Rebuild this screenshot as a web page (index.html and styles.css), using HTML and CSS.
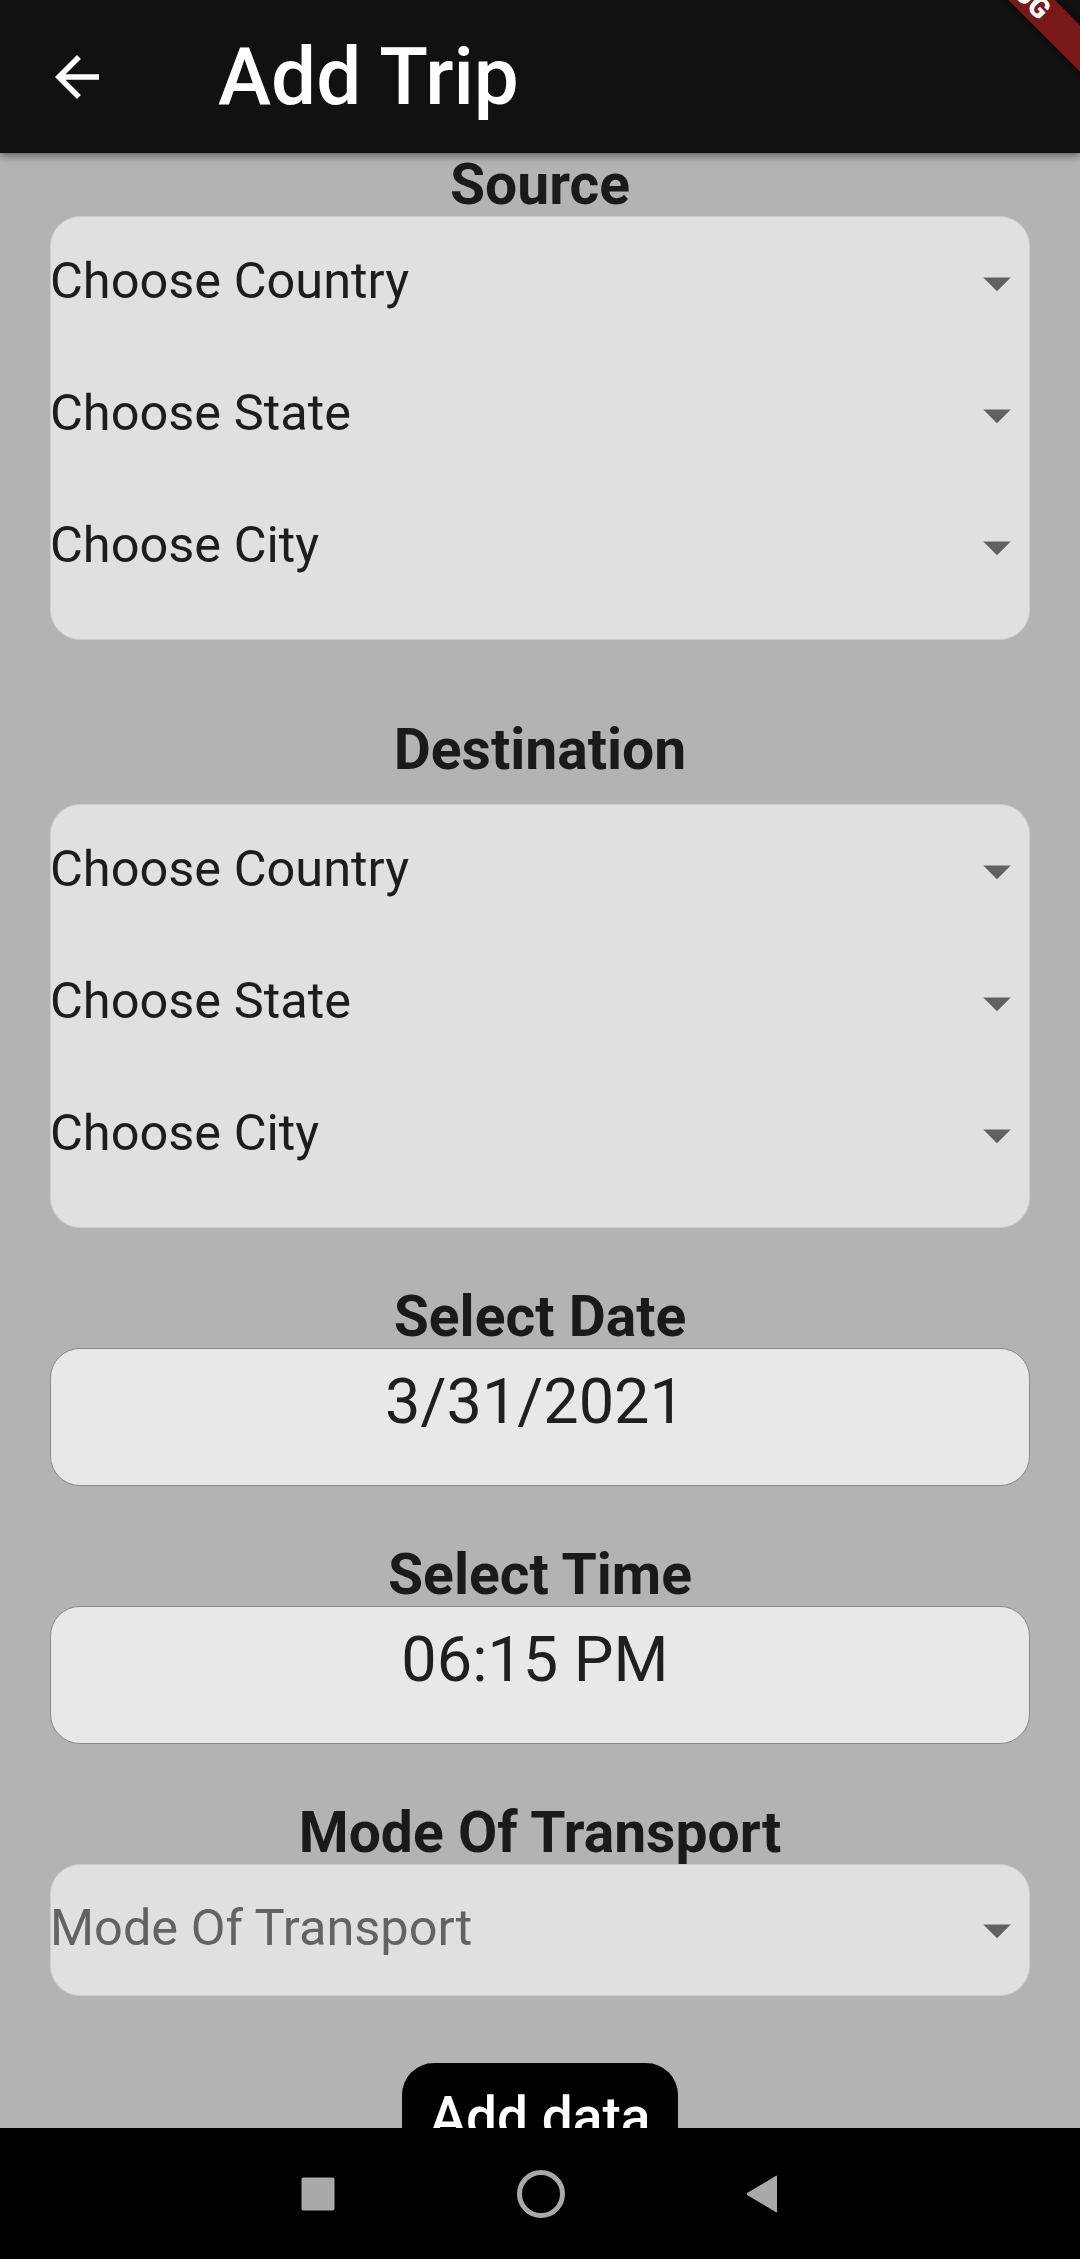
FILE: index.html
```
<!DOCTYPE html>
<html>
<head>
<meta charset="utf-8">
<link rel="stylesheet" href="styles.css">
</head>
<body>
<div class="screen">
  <header class="appbar">
    <div class="leading">
      <svg class="back" viewBox="0 0 24 24" width="66" height="66"><path d="M20 11H7.83l5.59-5.59L12 4l-8 8 8 8 1.41-1.41L7.83 13H20v-2z" fill="#fff"/></svg>
    </div>
    <h1 class="title">Add Trip</h1>
    <div class="debug-banner">DEBUG</div>
  </header>

  <main class="content">
    <div class="label">Source</div>
    <div class="card">
      <div class="dd-row"><span class="dd-text">Choose Country</span><svg class="dd-icon" viewBox="0 0 24 24" width="66" height="66"><path d="M7 10l5 5 5-5z"/></svg></div>
      <div class="dd-row"><span class="dd-text">Choose State</span><svg class="dd-icon" viewBox="0 0 24 24" width="66" height="66"><path d="M7 10l5 5 5-5z"/></svg></div>
      <div class="dd-row"><span class="dd-text">Choose City</span><svg class="dd-icon" viewBox="0 0 24 24" width="66" height="66"><path d="M7 10l5 5 5-5z"/></svg></div>
    </div>

    <div class="label label-dest">Destination</div>
    <div class="card">
      <div class="dd-row"><span class="dd-text">Choose Country</span><svg class="dd-icon" viewBox="0 0 24 24" width="66" height="66"><path d="M7 10l5 5 5-5z"/></svg></div>
      <div class="dd-row"><span class="dd-text">Choose State</span><svg class="dd-icon" viewBox="0 0 24 24" width="66" height="66"><path d="M7 10l5 5 5-5z"/></svg></div>
      <div class="dd-row"><span class="dd-text">Choose City</span><svg class="dd-icon" viewBox="0 0 24 24" width="66" height="66"><path d="M7 10l5 5 5-5z"/></svg></div>
    </div>

    <div class="label label-gap">Select Date</div>
    <div class="picker">3/31/2021</div>

    <div class="label label-gap">Select Time</div>
    <div class="picker">06:15 PM</div>

    <div class="label label-gap">Mode Of Transport</div>
    <div class="card card-single">
      <div class="dd-row dd-row-single"><span class="dd-text dd-hint">Mode Of Transport</span><svg class="dd-icon" viewBox="0 0 24 24" width="66" height="66"><path d="M7 10l5 5 5-5z"/></svg></div>
    </div>

    <div class="btn-wrap"><button class="btn">Add data</button></div>
  </main>

  <nav class="navbar">
    <svg class="nav-icon" width="40" height="40" viewBox="0 0 40 40"><rect x="3.5" y="3.5" width="33" height="33" rx="2" fill="#a9a9a9"/></svg>
    <svg class="nav-icon" width="56" height="56" viewBox="0 0 56 56"><circle cx="28" cy="28" r="21.5" fill="none" stroke="#a9a9a9" stroke-width="5"/></svg>
    <svg class="nav-icon" width="40" height="40" viewBox="0 0 40 40"><path d="M35 2.5 L35 37.5 Q35 39 33.6 38 L5.5 21.2 Q4 20 5.5 18.8 L33.6 2 Q35 1 35 2.5 Z" fill="#a9a9a9"/></svg>
  </nav>
</div>
</body>
</html>
```

FILE: styles.css
```
* {
  box-sizing: border-box;
}

html, body {
  margin: 0;
  padding: 0;
}

body {
  font-family: Roboto, "Liberation Sans", Arial, sans-serif;
  background: #b3b3b3;
}

.screen {
  width: 1080px;
  height: 2259px;
  display: flex;
  flex-direction: column;
  overflow: hidden;
}

.appbar {
  position: relative;
  flex: 0 0 153px;
  height: 153px;
  background: #111111;
  display: flex;
  align-items: center;
  box-shadow: 0 3px 8px rgba(0, 0, 0, 0.45);
  overflow: hidden;
  z-index: 2;
}

.leading {
  width: 154px;
  height: 153px;
  display: flex;
  align-items: center;
  justify-content: center;
}

.back {
  display: block;
}

.title {
  margin: 0 0 0 64px;
  color: #ffffff;
  font-size: 80px;
  font-weight: 500;
  line-height: 94px;
  letter-spacing: 0;
}

.debug-banner {
  position: absolute;
  left: 894px;
  top: -34px;
  width: 240px;
  height: 33px;
  background: #791818;
  color: #ffffff;
  font-size: 28px;
  font-weight: 900;
  line-height: 33px;
  text-align: center;
  transform: rotate(45deg);
  box-shadow: 0 0 6px rgba(0, 0, 0, 0.5);
}

.content {
  flex: 1 1 auto;
  overflow: hidden;
  padding: 0 50px;
  position: relative;
  z-index: 1;
}

.label {
  font-size: 57px;
  font-weight: 700;
  line-height: 63px;
  color: #1a1a1a;
  text-align: center;
}

.label-dest {
  margin-top: 78px;
  margin-bottom: 23px;
}

.label-gap {
  margin-top: 57px;
}

.card {
  background: #e0e0e0;
  border: 1px solid #cdcdcd;
  border-radius: 30px;
  padding: 0 0 26px;
}

.card-single {
  padding: 0;
}

.dd-row {
  height: 132px;
  display: flex;
  align-items: center;
  justify-content: space-between;
}

.dd-row-single {
  height: 130px;
}

.dd-text {
  font-size: 50.5px;
  color: #1d1d1d;
  white-space: nowrap;
  margin-left: -1px;
  margin-bottom: 5px;
}

.dd-hint {
  color: #636363;
}

.dd-icon {
  display: block;
  fill: #616161;
  margin-right: -1px;
}

.picker {
  height: 138px;
  background: #e8e8e8;
  border: 1px solid #8a8a8a;
  border-radius: 30px;
  padding: 16px 10px 0 0;
  text-align: center;
  font-size: 63px;
  line-height: 74px;
  color: #1f1f1f;
}

.btn-wrap {
  margin-top: 67px;
  display: flex;
  justify-content: center;
}

.btn {
  background: #000000;
  color: #ffffff;
  border: none;
  border-radius: 32px;
  font-family: Roboto, "Liberation Sans", Arial, sans-serif;
  font-size: 55px;
  font-weight: 500;
  padding: 22px 28px 30px;
  line-height: normal;
}

.navbar {
  flex: 0 0 131px;
  height: 131px;
  background: #000000;
  display: flex;
  align-items: center;
  justify-content: center;
  position: relative;
  z-index: 3;
}

.nav-icon {
  display: block;
}

.nav-icon:nth-child(1) {
  margin-right: 175px;
}

.nav-icon:nth-child(3) {
  margin-left: 173px;
}
```
